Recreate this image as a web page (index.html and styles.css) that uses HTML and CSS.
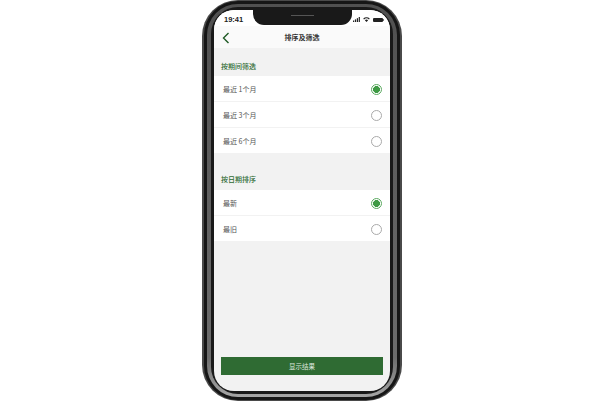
FILE: index.html
```html
<!DOCTYPE html>
<html lang="zh">
<head>
    <meta charset="UTF-8">
    <meta name="viewport" content="width=device-width, initial-scale=1.0">
    <title>排序及筛选</title>
    <link rel="stylesheet" href="styles.css">
</head>
<body>
    <div class="phone">
        <div class="phone-dark">
            <div class="phone-band">
                <div class="phone-inner">
                    <div class="screen">
                        <div class="notch"><span class="speaker"></span></div>
                        <div class="status-bar">
                            <span class="time">19:41</span>
                            <div class="status-icons">
                                <svg width="7" height="5" viewBox="0 0 7 5"><rect x="0" y="3.5" width="1.2" height="1.5" fill="#222"/><rect x="1.9" y="2.4" width="1.2" height="2.6" fill="#222"/><rect x="3.8" y="1.2" width="1.2" height="3.8" fill="#222"/><rect x="5.7" y="0" width="1.2" height="5" fill="#222"/></svg>
                                <svg width="7" height="5" viewBox="0 0 8 6"><path d="M0 2 A5.6 5.6 0 0 1 8 2 L6.9 3.1 A4 4 0 0 0 1.1 3.1 Z M2 4 A2.9 2.9 0 0 1 6 4 L4 6 Z" fill="#222"/></svg>
                                <svg width="11" height="4" viewBox="0 0 11 4"><rect x="0" y="0" width="10" height="4" rx="1" fill="#222"/><rect x="10.2" y="1.2" width="0.8" height="1.6" fill="#222"/></svg>
                            </div>
                        </div>
                        <div class="header">
                            <svg class="back-button" width="8" height="12" viewBox="0 0 8 12"><path d="M6.5 1 L1.5 6 L6.5 11" fill="none" stroke="#1f5a25" stroke-width="1.4"/></svg>
                            <span class="title">排序及筛选</span>
                        </div>
                        <div class="content">
                            <div class="section-label">按期间筛选</div>
                            <div class="list">
                                <div class="row"><span>最近 1个月</span><span class="radio checked"></span></div>
                                <div class="row"><span>最近 3个月</span><span class="radio"></span></div>
                                <div class="row"><span>最近 6个月</span><span class="radio"></span></div>
                            </div>
                            <div class="section-label second">按日期排序</div>
                            <div class="list">
                                <div class="row"><span>最新</span><span class="radio checked"></span></div>
                                <div class="row"><span>最旧</span><span class="radio"></span></div>
                            </div>
                            <div class="actions">
                                <button class="button">显示结果</button>
                            </div>
                        </div>
                    </div>
                </div>
            </div>
        </div>
    </div>
</body>
</html>
```

FILE: styles.css
```css
html, body {
    height: 100%;
}
body {
    background-color: white;
    font-family: "Noto Sans CJK SC", "Liberation Sans", sans-serif;
    margin: 0;
    display: flex;
    justify-content: center;
    align-items: flex-start;
    overflow: hidden;
}
.phone {
    width: 200px;
    height: 401px;
    box-sizing: border-box;
    padding: 1px 2px;
    border-radius: 36px;
    background-color: #4a4a4a;
}
.phone-dark {
    height: 100%;
    box-sizing: border-box;
    padding: 3px;
    border-radius: 34px;
    background-color: #161616;
}
.phone-band {
    height: 100%;
    box-sizing: border-box;
    padding: 3px 4px;
    border-radius: 31px;
    background: linear-gradient(180deg, #505050 0%, #6c6c6c 90%, #a6a6a6 100%);
}
.phone-inner {
    height: 100%;
    box-sizing: border-box;
    padding: 3px;
    border-radius: 27px;
    background-color: #191919;
}
.screen {
    position: relative;
    height: 100%;
    border-radius: 20px;
    overflow: hidden;
    background-color: #f2f2f2;
    display: flex;
    flex-direction: column;
}
.notch {
    position: absolute;
    top: 0;
    left: 39px;
    width: 99px;
    height: 15px;
    background-color: #191919;
    border-radius: 0 0 11px 11px;
    display: flex;
    justify-content: center;
    padding-top: 5px;
    box-sizing: border-box;
}
.speaker {
    width: 23px;
    height: 1px;
    background-color: #555;
}
.status-bar {
    height: 16px;
    background-color: white;
    display: flex;
    justify-content: space-between;
    align-items: center;
    padding: 3px 6px 0 10px;
    box-sizing: border-box;
}
.time {
    font-family: "Liberation Sans", sans-serif;
    font-size: 7.5px;
    font-weight: bold;
    color: #222;
}
.status-icons {
    display: flex;
    align-items: center;
    gap: 3px;
}
.header {
    position: relative;
    height: 22px;
    background-color: #fafafa;
    display: flex;
    justify-content: center;
    align-items: center;
}
.back-button {
    position: absolute;
    left: 8px;
    top: 6px;
}
.title {
    font-size: 7px;
    font-weight: bold;
    color: #333;
}
.content {
    flex-grow: 1;
    display: flex;
    flex-direction: column;
}
.section-label {
    height: 28px;
    padding: 12px 0 0 7px;
    box-sizing: border-box;
    font-size: 7px;
    line-height: 12px;
    font-weight: 500;
    color: #2f6b33;
}
.section-label.second {
    height: 36px;
    padding-top: 19px;
}
.list {
    background-color: white;
}
.row {
    height: 26px;
    box-sizing: border-box;
    display: flex;
    justify-content: space-between;
    align-items: center;
    padding: 1px 8px 0 9px;
    font-size: 7px;
    color: #555;
    border-bottom: 1px solid #f2f2f2;
}
.radio {
    width: 11px;
    height: 11px;
    box-sizing: border-box;
    border: 1px solid #aaa;
    border-radius: 50%;
    background-color: white;
}
.radio.checked {
    border-color: #5aa95f;
    background: radial-gradient(circle, #3f9a45 0 3.2px, white 3.7px);
}
.actions {
    margin-top: auto;
    padding: 0 7px 16px;
}
.button {
    width: 100%;
    height: 18px;
    padding: 0;
    border: none;
    background-color: #2f6b33;
    color: #dfe9df;
    font-family: inherit;
    font-size: 6.5px;
    display: block;
}
```
